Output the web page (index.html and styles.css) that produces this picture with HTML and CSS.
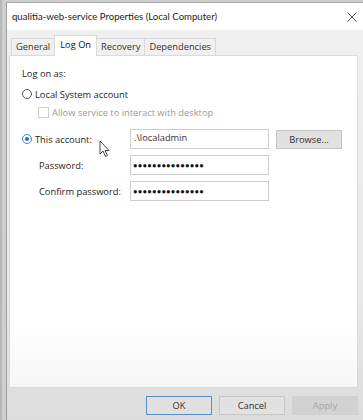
FILE: index.html
```html
<!DOCTYPE html>
<html lang="en">
  <head>
    <meta charset="UTF-8" />
    <meta name="viewport" content="width=device-width, initial-scale=1.0" />
    <title>qualitia-web-service Properties</title>
    <link rel="stylesheet" href="styles.css">
  </head>
  <body>
    <div class="window">
      <div class="titlebar">
        <span class="title">qualitia-web-service Properties (Local Computer)</span>
        <svg class="close" width="10" height="10" viewBox="0 0 10 10">
          <path d="M0.5 0.5 L9.5 9.5 M9.5 0.5 L0.5 9.5" stroke="#555" stroke-width="1" fill="none" />
        </svg>
      </div>

      <div class="content">
        <div class="tabs">
          <div class="tab">General</div>
          <div class="tab active">Log On</div>
          <div class="tab">Recovery</div>
          <div class="tab">Dependencies</div>
        </div>

        <div class="panel">
          <div class="heading">Log on as:</div>

          <div class="option">
            <span class="radio"></span>
            <span>Local System account</span>
          </div>
          <div class="option sub disabled">
            <span class="checkbox"></span>
            <span>Allow service to interact with desktop</span>
          </div>

          <div class="field first">
            <div class="option">
              <span class="radio checked"></span>
              <span>This account:</span>
            </div>
            <div class="input">.\localadmin</div>
            <button class="button">Browse...</button>
          </div>
          <div class="field">
            <span class="label">Password:</span>
            <div class="input dots">●●●●●●●●●●●●●●●</div>
          </div>
          <div class="field">
            <span class="label">Confirm password:</span>
            <div class="input dots">●●●●●●●●●●●●●●●</div>
          </div>

          <!-- mouse pointer over the dialog -->
          <svg class="cursor" width="12" height="18" viewBox="0 0 12 18">
            <path d="M1 1 L1 14 L4 11 L6.5 16.5 L8.5 15.5 L6 10.5 L10 10.5 Z" fill="#fff" stroke="#333" stroke-width="0.9" />
          </svg>
        </div>

        <div class="footer">
          <button class="button default">OK</button>
          <button class="button">Cancel</button>
          <button class="button" disabled>Apply</button>
        </div>
      </div>
    </div>
  </body>
</html>
```

FILE: styles.css
```css
body {
  margin: 0;
  height: 420px;
  overflow: hidden;
  font-family: "Open Sans", "Noto Sans", Arial, sans-serif;
  font-size: 9.3px;
  color: #1a1a1a;
  background-color: #cfcfcf;
  padding: 2px 0 0 4px;
  box-sizing: border-box;
  border-left: 2px solid #b8b8b8;
}

.window {
  height: 418px;
  border-top: 1px solid #a9a9a9;
  border-left: 1px solid #a0a0a0;
  background: linear-gradient(#f1f1f1, #e9e9e9 70%, #dcdcdc);
  display: flex;
  flex-direction: column;
}

.titlebar {
  height: 27px;
  background-color: #fff;
  display: flex;
  align-items: center;
  justify-content: space-between;
  padding: 0 6px 0 5px;
}

.title {
  font-family: Lato, "Open Sans", sans-serif;
  font-size: 9.6px;
  color: #222;
}

.content {
  flex: 1;
  padding: 6px 0 0 2px;
  display: flex;
  flex-direction: column;
}

.tabs {
  display: flex;
  align-items: flex-end;
  height: 19px;
  padding-left: 2px;
  position: relative;
  z-index: 1;
}

.tab {
  height: 16px;
  line-height: 15px;
  padding: 0 4px;
  border: 1px solid #d9d9d9;
  border-bottom: none;
  background-color: #f0f0f0;
  color: #333;
  margin-right: -1px;
}

.tab.active {
  height: 20px;
  line-height: 17px;
  background-color: #fff;
  margin-bottom: -1px;
  padding: 0 5px;
  color: #111;
}

.panel {
  height: 333px;
  width: 349px;
  background: linear-gradient(#fff, #fff 80%, #f6f6f6);
  border: 1px solid #dadada;
  padding: 9px 0 0 12px;
  box-sizing: border-box;
  position: relative;
  display: flex;
  flex-direction: column;
}

.heading {
  margin-top: 2px;
  color: #222;
}

.option {
  display: flex;
  align-items: center;
  gap: 3px;
  height: 14px;
  margin-top: 7px;
  color: #222;
}

.option.sub {
  margin-left: 16px;
  margin-top: 4px;
}

.disabled {
  color: #9a9a9a;
}

.radio {
  width: 8px;
  height: 8px;
  border: 1px solid #555;
  border-radius: 50%;
  background-color: #fff;
  box-sizing: content-box;
  position: relative;
}

.radio.checked {
  border-color: #3b82d6;
}

.radio.checked::after {
  content: "";
  position: absolute;
  left: 2px;
  top: 2px;
  width: 4px;
  height: 4px;
  border-radius: 50%;
  background-color: #1f6fd0;
}

.checkbox {
  width: 9px;
  height: 9px;
  border: 1px solid #cfcfcf;
  background-color: #fff;
}

.field {
  display: flex;
  align-items: center;
  margin-top: 6px;
}

.field.first {
  margin-top: 10px;
}

.field .option {
  margin-top: 0;
  width: 108px;
}

.label {
  width: 91px;
  padding-left: 17px;
  color: #222;
}

.input {
  width: 139px;
  height: 20px;
  border: 1px solid #cdcdcd;
  box-sizing: border-box;
  padding: 0 3px;
  line-height: 16px;
  font-size: 9.3px;
  background-color: #fff;
  color: #333;
}

.input.dots {
  font-size: 7.5px;
  letter-spacing: 0.2px;
  line-height: 18px;
  padding: 0 2px;
  color: #111;
}

.button {
  font-family: "Open Sans", "Noto Sans", Arial, sans-serif;
  font-size: 9.3px;
  height: 19px;
  width: 66px;
  padding: 0;
  border: 1px solid #c6c6c6;
  background-color: #e1e1e1;
  color: #333;
}

.field .button {
  margin-left: 7px;
}

.button.default {
  border-color: #5a8fc6;
  background-color: #e0e0e0;
}

.button:disabled {
  background-color: #d2d2d2;
  border-color: #d0d0d0;
  color: #a6a6a6;
}

.footer {
  display: flex;
  justify-content: flex-end;
  gap: 7px;
  padding: 8px 5px 0 0;
}

.cursor {
  position: absolute;
  left: 89px;
  top: 84px;
}
```
